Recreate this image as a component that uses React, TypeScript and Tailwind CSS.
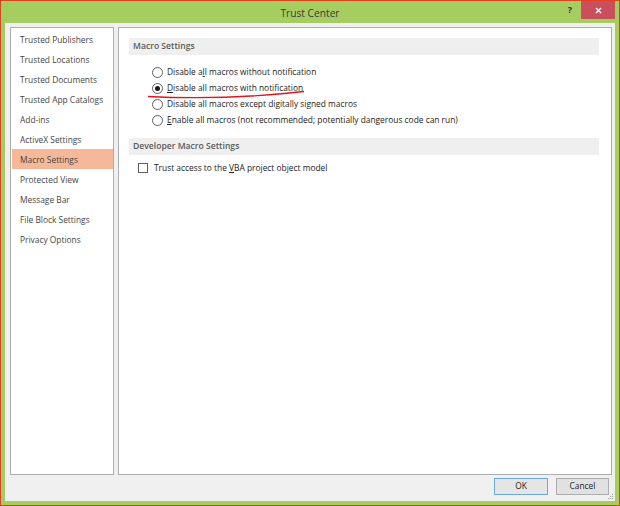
import type { ReactNode } from "react";

const SIDEBAR_ITEMS = [
  "Trusted Publishers",
  "Trusted Locations",
  "Trusted Documents",
  "Trusted App Catalogs",
  "Add-ins",
  "ActiveX Settings",
  "Macro Settings",
  "Protected View",
  "Message Bar",
  "File Block Settings",
  "Privacy Options",
];

function Key({ children }: { children: ReactNode }) {
  return <span className="underline underline-offset-[1px]">{children}</span>;
}

function Radio({ checked, children }: { checked?: boolean; children: ReactNode }) {
  return (
    <div className="flex h-[16px] items-center">
      <span className="ml-[23px] flex h-[11px] w-[11px] items-center justify-center rounded-full border border-[#5f5f5f] bg-white">
        {checked && <span className="h-[5px] w-[5px] rounded-full bg-[#1a1a1a]" />}
      </span>
      <span className="ml-[4px] text-[8.4px] leading-none text-[#222]">{children}</span>
    </div>
  );
}

function SectionHeader({ children }: { children: ReactNode }) {
  return (
    <div className="flex h-[17px] items-center bg-[#efefef] pl-[4px] text-[8.6px] font-semibold text-[#5a5a5a]">
      {children}
    </div>
  );
}

export default function App() {
  return (
    <div className="flex h-[506px] w-[620px] flex-col border border-[#e2401f] bg-[#a6cd5f] font-['Open_Sans',sans-serif]">
      <div className="relative flex h-[22px] shrink-0 items-center justify-center pt-[3px]">
        <span className="text-[10.2px] text-[#3a3a3a]">Trust Center</span>
        <span className="absolute right-[47px] top-[4px] text-[9px] font-bold leading-none text-[#333]">?</span>
        <div className="absolute right-[4px] top-0 flex h-[18px] w-[34px] items-center justify-center bg-[#c9505a]">
          <svg width="7" height="7" viewBox="0 0 7 7">
            <path d="M1 1L6 6M6 1L1 6" stroke="white" strokeWidth="1.4" />
          </svg>
        </div>
      </div>

      <div className="relative mx-[4px] mb-[4px] flex flex-1 flex-col bg-[#f0f0f0] pl-[5px] pr-[3px] pt-[4px]">
        <div className="flex h-[448px] gap-[4px]">
          <div className="w-[104px] border border-[#adadad] bg-white pt-px">
            {SIDEBAR_ITEMS.map((item) => (
              <div
                key={item}
                className={`ml-px flex h-[20px] items-center pl-[8px] pt-[2px] text-[8.4px] text-[#444] ${
                  item === "Macro Settings" ? "bg-[#f5b898]" : ""
                }`}
              >
                {item}
              </div>
            ))}
          </div>

          <div className="relative flex-1 border border-[#adadad] bg-white pl-[10px] pr-[12px] pt-[10px]">
            <SectionHeader>Macro Settings</SectionHeader>
            <div className="mt-[9px]">
              <Radio>
                Disable a<Key>l</Key>l macros without notification
              </Radio>
              <Radio checked>
                <Key>D</Key>isable all macros with notification
              </Radio>
              <Radio>
                Disable all macros except di<Key>g</Key>itally signed macros
              </Radio>
              <Radio>
                <Key>E</Key>nable all macros (not recommended; potentially dangerous code can run)
              </Radio>
            </div>

            <div className="mt-[10px]">
              <SectionHeader>Developer Macro Settings</SectionHeader>
            </div>
            <div className="mt-[5px] flex h-[16px] items-center">
              <span className="ml-[9px] h-[10px] w-[10px] border border-[#5f5f5f] bg-white" />
              <span className="ml-[6px] text-[8.4px] leading-none text-[#222]">
                Trust access to the <Key>V</Key>BA project object model
              </span>
            </div>

            <svg
              className="absolute left-[28px] top-[61px]"
              width="160"
              height="12"
              viewBox="0 0 160 12"
            >
              <path d="M1 7.5 C 40 9.5, 90 10, 157 2.5" fill="none" stroke="#e3141b" strokeWidth="1.3" />
            </svg>
          </div>
        </div>

        <div className="mt-[3px] flex h-[17px] justify-end gap-[8px] pr-[3px]">
          <button className="flex w-[54px] items-center justify-center border border-[#6fa7e0] bg-[#e5e5e5] text-[8.4px] text-[#222]">
            OK
          </button>
          <button className="flex w-[53px] items-center justify-center border border-[#adadad] bg-[#e1e1e1] text-[8.4px] text-[#222]">
            Cancel
          </button>
        </div>

        <svg className="absolute bottom-[1px] right-[1px]" width="6" height="6" viewBox="0 0 6 6">
          <rect x="4" y="0" width="1" height="1" fill="#a0a0a0" />
          <rect x="2" y="2" width="1" height="1" fill="#a0a0a0" />
          <rect x="4" y="2" width="1" height="1" fill="#a0a0a0" />
          <rect x="0" y="4" width="1" height="1" fill="#a0a0a0" />
          <rect x="2" y="4" width="1" height="1" fill="#a0a0a0" />
          <rect x="4" y="4" width="1" height="1" fill="#a0a0a0" />
        </svg>
      </div>
    </div>
  );
}
